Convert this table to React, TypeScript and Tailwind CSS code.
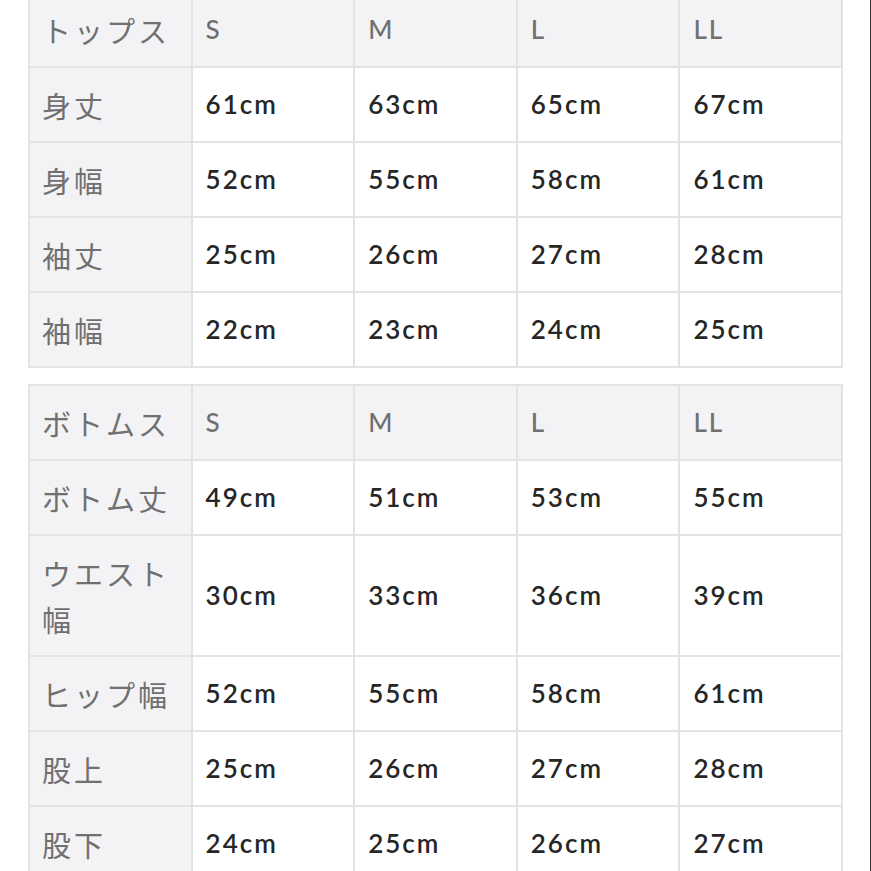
import React from 'react';

interface SizeTable {
  title: string;
  rows: { label: string; values: string[] }[];
}

const sizes = ['S', 'M', 'L', 'LL'];

const tables: SizeTable[] = [
  {
    title: 'トップス',
    rows: [
      { label: '身丈', values: ['61cm', '63cm', '65cm', '67cm'] },
      { label: '身幅', values: ['52cm', '55cm', '58cm', '61cm'] },
      { label: '袖丈', values: ['25cm', '26cm', '27cm', '28cm'] },
      { label: '袖幅', values: ['22cm', '23cm', '24cm', '25cm'] },
    ],
  },
  {
    title: 'ボトムス',
    rows: [
      { label: 'ボトム丈', values: ['49cm', '51cm', '53cm', '55cm'] },
      { label: 'ウエスト幅', values: ['30cm', '33cm', '36cm', '39cm'] },
      { label: 'ヒップ幅', values: ['52cm', '55cm', '58cm', '61cm'] },
      { label: '股上', values: ['25cm', '26cm', '27cm', '28cm'] },
      { label: '股下', values: ['24cm', '25cm', '26cm', '27cm'] },
    ],
  },
];

const jp = { fontFamily: '"Noto Sans CJK JP", "Noto Sans", sans-serif' };
const num = { fontFamily: 'Lato, "Noto Sans", sans-serif' };

function Table({ table }: { table: SizeTable }) {
  return (
    <table className="w-[815px] table-fixed border-collapse">
      <tbody>
        {/* header */}
        <tr className="bg-[#f3f3f6]">
          <th
            style={jp}
            className="border-2 border-[#e3e3e6] px-3 py-[13.5px] text-left align-middle text-[29px] font-normal leading-[46px] tracking-[3px] text-[#707070]"
          >
            {table.title}
          </th>
          {sizes.map((s) => (
            <th
              key={s}
              style={num}
              className="border-2 border-[#e3e3e6] px-[13px] text-left align-middle text-[26px] font-medium tracking-[2px] text-[#707070]"
            >
              {s}
            </th>
          ))}
        </tr>
        {table.rows.map((row) => (
          <tr key={row.label}>
            <td
              style={jp}
              className="border-2 border-[#e3e3e6] bg-[#f3f3f6] px-3 py-[13.5px] align-middle text-[29px] leading-[46px] tracking-[3px] text-[#707070]"
            >
              {row.label}
            </td>
            {row.values.map((v, i) => (
              <td
                key={i}
                style={num}
                className="border-2 border-[#e3e3e6] bg-white px-[13px] align-middle text-[26px] font-semibold tracking-[2px] text-[#262626]"
              >
                {v}
              </td>
            ))}
          </tr>
        ))}
      </tbody>
    </table>
  );
}

export default function App() {
  return (
    <div className="h-[871px] w-full overflow-hidden border-r border-[#333] bg-white">
      <div className="-mt-[9px] ml-[28px] flex flex-col gap-[16px]">
        {tables.map((t) => (
          <Table key={t.title} table={t} />
        ))}
      </div>
    </div>
  );
}
